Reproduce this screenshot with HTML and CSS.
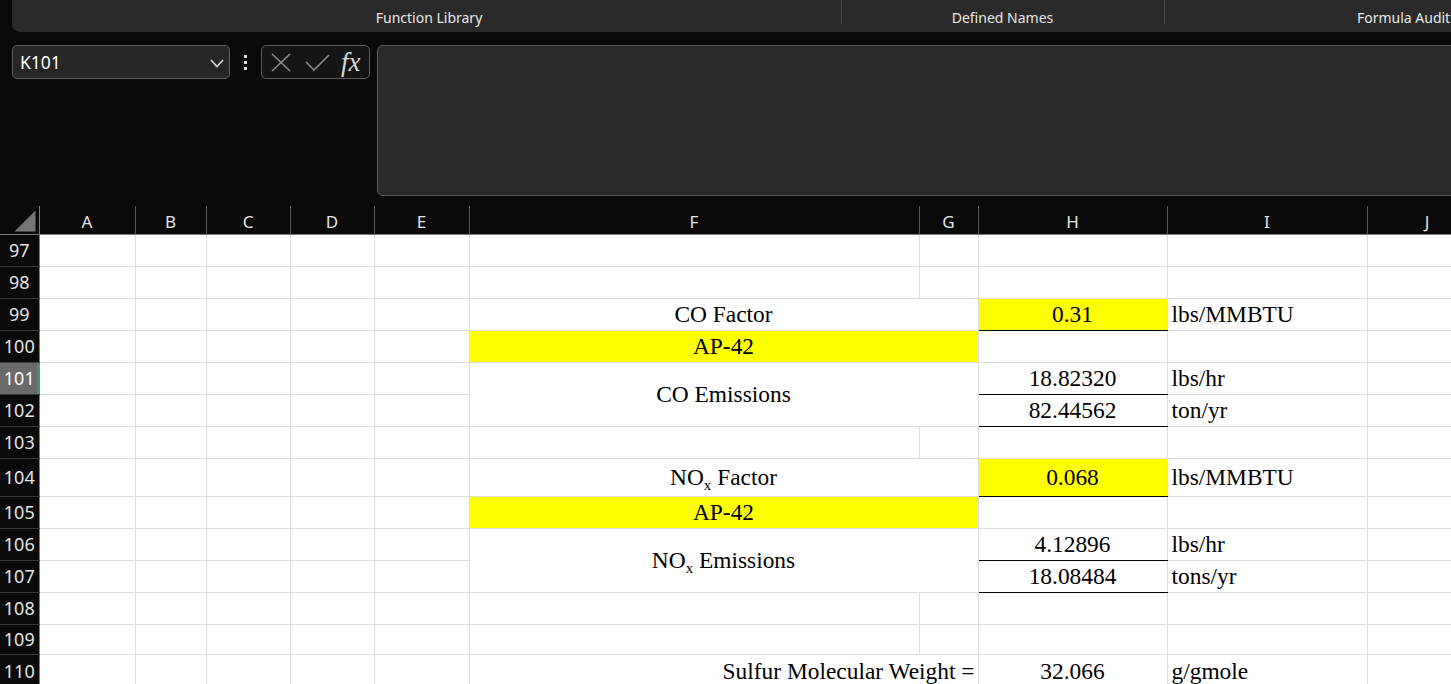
FILE: index.html
```html
<!DOCTYPE html>
<html lang="en">
<head>
    <meta charset="UTF-8">
    <title>Emissions - Excel</title>
    <link rel="stylesheet" href="styles.css">
</head>
<body>

    <!-- Ribbon group labels -->
    <div class="ribbon">
        <div class="group group-func">Function Library</div>
        <div class="group group-names">Defined Names</div>
        <div class="group group-audit">Formula Auditing</div>
    </div>

    <!-- Name box + formula bar -->
    <div class="formula-row">
        <div class="name-box">
            <span>K101</span>
            <svg width="14" height="9" viewBox="0 0 14 9"><polyline points="1,1 7,7.5 13,1" fill="none" stroke="#d8d8d8" stroke-width="1.6"/></svg>
        </div>
        <div class="dots"><i></i><i></i><i></i></div>
        <div class="fx-box">
            <svg width="20" height="19" viewBox="0 0 20 19"><path d="M1,1 L19,18 M19,1 L1,18" stroke="#8c8c8c" stroke-width="1.6"/></svg>
            <svg width="25" height="17" viewBox="0 0 25 17"><polyline points="1,8 9,16 24,1" fill="none" stroke="#8c8c8c" stroke-width="1.6"/></svg>
            <span class="fx">fx</span>
        </div>
        <div class="formula-bar"></div>
    </div>

    <!-- Worksheet -->
    <div class="sheet">
        <table class="grid">
            <colgroup>
                <col style="width:39px">
                <col style="width:96px">
                <col style="width:71px">
                <col style="width:84px">
                <col style="width:84px">
                <col style="width:95px">
                <col style="width:450px">
                <col style="width:59px">
                <col style="width:189px">
                <col style="width:200px">
                <col style="width:120px">
            </colgroup>
            <thead>
                <tr>
                    <th class="corner"><div class="tri"></div></th>
                    <th>A</th><th>B</th><th>C</th><th>D</th><th>E</th>
                    <th>F</th><th>G</th><th>H</th><th>I</th><th class="col-j">J</th>
                </tr>
            </thead>
            <tbody>
                <tr>
                    <th>97</th>
                    <td></td><td></td><td></td><td></td><td></td><td></td><td></td><td></td><td></td><td></td>
                </tr>
                <tr>
                    <th>98</th>
                    <td></td><td></td><td></td><td></td><td></td><td></td><td></td><td></td><td></td><td></td>
                </tr>
                <tr>
                    <th>99</th>
                    <td></td><td></td><td></td><td></td><td></td>
                    <td colspan="2" class="c">CO Factor</td>
                    <td class="c yellow line">0.31</td>
                    <td>lbs/MMBTU</td>
                    <td></td>
                </tr>
                <tr>
                    <th>100</th>
                    <td></td><td></td><td></td><td></td><td></td>
                    <td colspan="2" class="c yellow">AP-42</td>
                    <td></td><td></td><td></td>
                </tr>
                <tr>
                    <th class="active">101</th>
                    <td></td><td></td><td></td><td></td><td></td>
                    <td colspan="2" rowspan="2" class="c">CO Emissions</td>
                    <td class="c line">18.82320</td>
                    <td>lbs/hr</td>
                    <td></td>
                </tr>
                <tr>
                    <th>102</th>
                    <td></td><td></td><td></td><td></td><td></td>
                    <td class="c line">82.44562</td>
                    <td>ton/yr</td>
                    <td></td>
                </tr>
                <tr>
                    <th>103</th>
                    <td></td><td></td><td></td><td></td><td></td><td></td><td></td><td></td><td></td><td></td>
                </tr>
                <tr class="tall">
                    <th>104</th>
                    <td></td><td></td><td></td><td></td><td></td>
                    <td colspan="2" class="c">NO<span class="sub">x</span> Factor</td>
                    <td class="c yellow line">0.068</td>
                    <td>lbs/MMBTU</td>
                    <td></td>
                </tr>
                <tr>
                    <th>105</th>
                    <td></td><td></td><td></td><td></td><td></td>
                    <td colspan="2" class="c yellow">AP-42</td>
                    <td></td><td></td><td></td>
                </tr>
                <tr>
                    <th>106</th>
                    <td></td><td></td><td></td><td></td><td></td>
                    <td colspan="2" rowspan="2" class="c">NO<span class="sub">x</span> Emissions</td>
                    <td class="c line">4.12896</td>
                    <td>lbs/hr</td>
                    <td></td>
                </tr>
                <tr>
                    <th>107</th>
                    <td></td><td></td><td></td><td></td><td></td>
                    <td class="c line">18.08484</td>
                    <td>tons/yr</td>
                    <td></td>
                </tr>
                <tr>
                    <th>108</th>
                    <td></td><td></td><td></td><td></td><td></td><td></td><td></td><td></td><td></td><td></td>
                </tr>
                <tr class="short">
                    <th>109</th>
                    <td></td><td></td><td></td><td></td><td></td><td></td><td></td><td></td><td></td><td></td>
                </tr>
                <tr class="last">
                    <th>110</th>
                    <td></td><td></td><td></td><td></td><td></td>
                    <td colspan="2" class="r">Sulfur Molecular Weight =</td>
                    <td class="c">32.066</td>
                    <td>g/gmole</td>
                    <td></td>
                </tr>
            </tbody>
        </table>
    </div>

</body>
</html>
```

FILE: styles.css
```css
* {
    margin: 0;
    padding: 0;
    box-sizing: border-box;
}

body {
    width: 1451px;
    height: 684px;
    overflow: hidden;
    background: #0a0a0a;
    font-family: "Noto Sans", "Open Sans", sans-serif;
    color: #e6e6e6;
}

/* ribbon */
.ribbon {
    display: flex;
    height: 32px;
    margin-left: 12px;
    background: #2a2a2a;
    border-bottom-left-radius: 8px;
    overflow: hidden;
}

.ribbon .group {
    flex: none;
    height: 32px;
    padding-top: 8px;
    text-align: center;
    font-size: 14px;
    color: #e8e8e8;
    position: relative;
}

.ribbon .group + .group::before {
    content: "";
    position: absolute;
    left: 0;
    top: 0;
    height: 24px;
    border-left: 1px solid #4a4a4a;
}

.group-func { width: 829px; padding-left: 5px; }
.group-names { width: 323px; }
.group-audit { width: 500px; }

/* formula row */
.formula-row {
    display: flex;
    align-items: flex-start;
    height: 151px;
    margin-top: 13px;
    padding-left: 12px;
}

.name-box {
    width: 218px;
    height: 34px;
    display: flex;
    align-items: center;
    justify-content: space-between;
    padding: 0 5px 0 7px;
    background: #262626;
    border: 1px solid #5c5c5c;
    border-radius: 5px;
    font-size: 17.5px;
    color: #fff;
}

.name-box svg {
    margin-top: 2px;
}

.dots {
    width: 31px;
    height: 34px;
    display: flex;
    flex-direction: column;
    align-items: center;
    justify-content: center;
    gap: 3px;
}

.dots i {
    width: 3px;
    height: 3px;
    background: #dcdcdc;
}

.fx-box {
    width: 109px;
    height: 34px;
    display: flex;
    align-items: center;
    padding-left: 9px;
    gap: 14px;
    background: #151515;
    border: 1px solid #5c5c5c;
    border-radius: 5px;
}

.fx-box .fx {
    margin-left: -3px;
    font-family: "Liberation Serif", serif;
    font-style: italic;
    font-size: 27px;
    color: #d8d8d8;
    line-height: 1;
}

.formula-bar {
    flex: 1;
    height: 151px;
    margin-left: 7px;
    margin-right: -12px;
    background: #2a2a2a;
    border: 1px solid #5c5c5c;
    border-radius: 6px;
}

/* worksheet */
.sheet {
    margin-top: 10px;
    width: 1451px;
    overflow: hidden;
}

.grid {
    table-layout: fixed;
    width: 1487px;
    border-collapse: collapse;
}

.grid thead tr {
    height: 28px;
}

.grid thead th {
    height: 28px;
    font-weight: normal;
    font-size: 17px;
    line-height: 20px;
    color: #e4e4e4;
    background: #0a0a0a;
    border-right: 1px solid #555;
    border-bottom: 1px solid #7c7c7c;
    padding-top: 4px;
}

.grid thead th.corner {
    position: relative;
    border-right-color: #7c7c7c;
}

.tri {
    position: absolute;
    right: 3px;
    bottom: 2px;
    width: 21px;
    height: 21px;
    background: #767676;
    clip-path: polygon(100% 0, 100% 100%, 0 100%);
}

.grid tbody th {
    font-weight: normal;
    font-size: 18px;
    color: #e4e4e4;
    background: #0a0a0a;
    border-right: 1px solid #7c7c7c;
    border-bottom: 1px solid #3a3a3a;
    text-align: center;
}

.grid tbody th.active {
    background: #6a6a6a;
    color: #fff;
    box-shadow: inset -2px 0 0 #3f9463;
}

.grid tbody tr {
    height: 32px;
}

.grid tbody tr.tall { height: 38px; }
.grid tbody tr.short { height: 30px; }
.grid tbody tr.last { height: 34px; }

.grid td {
    background: #fff;
    border: 1px solid #dedede;
    padding: 0 4px;
    font-family: "Liberation Serif", "Times New Roman", serif;
    font-size: 23.4px;
    color: #000;
    white-space: nowrap;
    overflow: hidden;
    vertical-align: middle;
}

.grid td.c { text-align: center; }
.grid td.r { text-align: right; padding-right: 3px; }

.grid td.yellow {
    background: #ffff00;
}

.grid td.line {
    border-bottom-color: #000;
}

.sub {
    font-size: 15px;
    position: relative;
    top: 5px;
}
```
